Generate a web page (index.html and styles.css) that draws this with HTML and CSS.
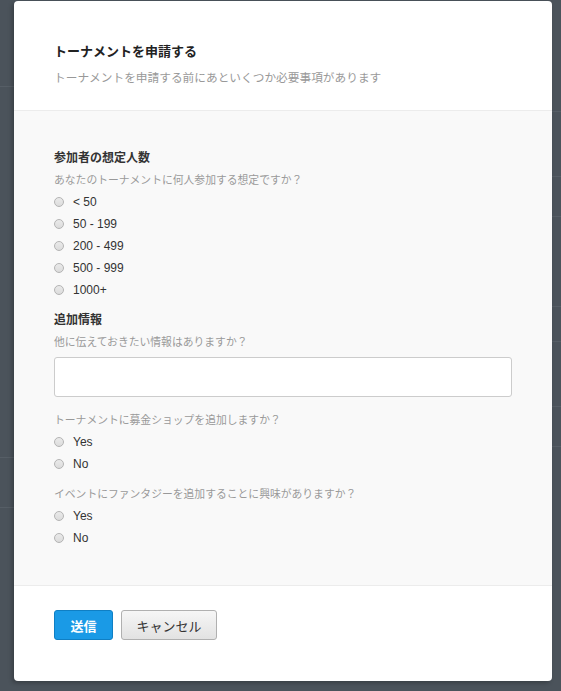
FILE: index.html
```html
<!DOCTYPE html>
<html lang="ja">
<head>
  <meta charset="UTF-8">
  <meta name="viewport" content="width=device-width, initial-scale=1.0">
  <title>トーナメントを申請する</title>
  <link rel="stylesheet" href="styles.css">
</head>
<body>
  <!-- page behind the dimmed overlay -->
  <div class="page">
    <div class="page-side">
      <div class="row" style="height: 87px"></div>
      <div class="row" style="height: 371px"></div>
      <div class="row" style="height: 50px"></div>
    </div>
    <div class="page-main">
      <div class="row" style="height: 112px"></div>
      <div class="row" style="height: 65px"></div>
      <div class="row" style="height: 40px"></div>
      <div class="row" style="height: 90px"></div>
      <div class="row" style="height: 35px"></div>
      <div class="row" style="height: 65px"></div>
      <div class="row" style="height: 40px"></div>
    </div>
  </div>

  <div class="overlay">
    <div class="modal">
      <div class="modal-header">
        <h1>トーナメントを申請する</h1>
        <p class="subtitle">トーナメントを申請する前にあといくつか必要事項があります</p>
      </div>

      <form class="modal-body">
        <h2>参加者の想定人数</h2>
        <p class="hint">あなたのトーナメントに何人参加する想定ですか？</p>
        <label class="option"><input type="radio" name="size"> &lt; 50</label>
        <label class="option"><input type="radio" name="size"> 50 - 199</label>
        <label class="option"><input type="radio" name="size"> 200 - 499</label>
        <label class="option"><input type="radio" name="size"> 500 - 999</label>
        <label class="option"><input type="radio" name="size"> 1000+</label>

        <h2 class="gap">追加情報</h2>
        <p class="hint">他に伝えておきたい情報はありますか？</p>
        <textarea class="info"></textarea>

        <p class="hint question">トーナメントに募金ショップを追加しますか？</p>
        <label class="option"><input type="radio" name="shop"> Yes</label>
        <label class="option"><input type="radio" name="shop"> No</label>

        <p class="hint gap">イベントにファンタジーを追加することに興味がありますか？</p>
        <label class="option"><input type="radio" name="fantasy"> Yes</label>
        <label class="option"><input type="radio" name="fantasy"> No</label>
      </form>

      <div class="modal-footer">
        <button class="btn btn-primary">送信</button>
        <button class="btn btn-default">キャンセル</button>
      </div>
    </div>
  </div>
</body>
</html>
```

FILE: styles.css
```css
*, *::before, *::after {
  margin: 0;
  padding: 0;
  box-sizing: border-box;
}

body {
  font-family: "Liberation Sans", "Noto Sans CJK JP", sans-serif;
  background-color: #4b535b;
  color: #333;
  height: 691px;
  overflow: hidden;
  position: relative;
}

.page {
  display: grid;
  grid-template-columns: 14px 1fr;
}

.page .row {
  border-bottom: 1px solid #565e66;
}

.overlay {
  position: absolute;
  top: 0;
  left: 0;
  right: 0;
  bottom: 0;
}

.modal {
  margin: 1px 0 0 14px;
  width: 538px;
  background-color: white;
  border-radius: 4px;
  box-shadow: -2px 2px 4px rgba(0, 0, 0, 0.25);
  overflow: hidden;
}

.modal-header {
  padding: 40px 40px 21px;
  border-bottom: 1px solid #ececec;
}

.modal-header h1 {
  font-size: 13px;
  line-height: 22px;
  font-weight: bold;
  color: #222;
}

.subtitle {
  margin-top: 4px;
  font-size: 11.7px;
  line-height: 22px;
  color: #999;
}

.modal-body {
  display: flex;
  flex-direction: column;
  align-items: flex-start;
  padding: 36px 40px 36px;
  background-color: #f9f9f9;
  border-bottom: 1px solid #ececec;
}

.modal-body h2 {
  font-size: 12px;
  line-height: 22px;
  font-weight: bold;
  color: #333;
}

.hint {
  font-size: 10.8px;
  line-height: 22px;
  color: #999;
}

.gap {
  margin-top: 8px;
}

.question {
  margin-top: 12px;
}

.option {
  display: flex;
  align-items: center;
  gap: 9px;
  font-size: 12px;
  line-height: 22px;
  color: #333;
}

.option input {
  appearance: none;
  width: 10px;
  height: 10px;
  border-radius: 50%;
  border: 1px solid #b4b4b4;
  background: linear-gradient(#eaeaea, #dcdcdc);
  margin: 0;
}

.info {
  margin-top: 4px;
  width: 100%;
  height: 40px;
  border: 1px solid #ccc;
  border-radius: 3px;
  background-color: white;
  resize: none;
}

.modal-footer {
  display: flex;
  gap: 8px;
  padding: 24px 40px 41px;
}

.btn {
  height: 30px;
  font-family: "Liberation Sans", "Noto Sans CJK JP", sans-serif;
  font-size: 13px;
  border-radius: 3px;
  cursor: pointer;
}

.btn-primary {
  width: 59px;
  background-color: #1a9ae6;
  border: 1px solid #0f7fc4;
  color: white;
  font-weight: bold;
}

.btn-default {
  width: 96px;
  background: linear-gradient(#f6f6f6, #e2e2e2);
  border: 1px solid #b0b0b0;
  color: #333;
}
```
